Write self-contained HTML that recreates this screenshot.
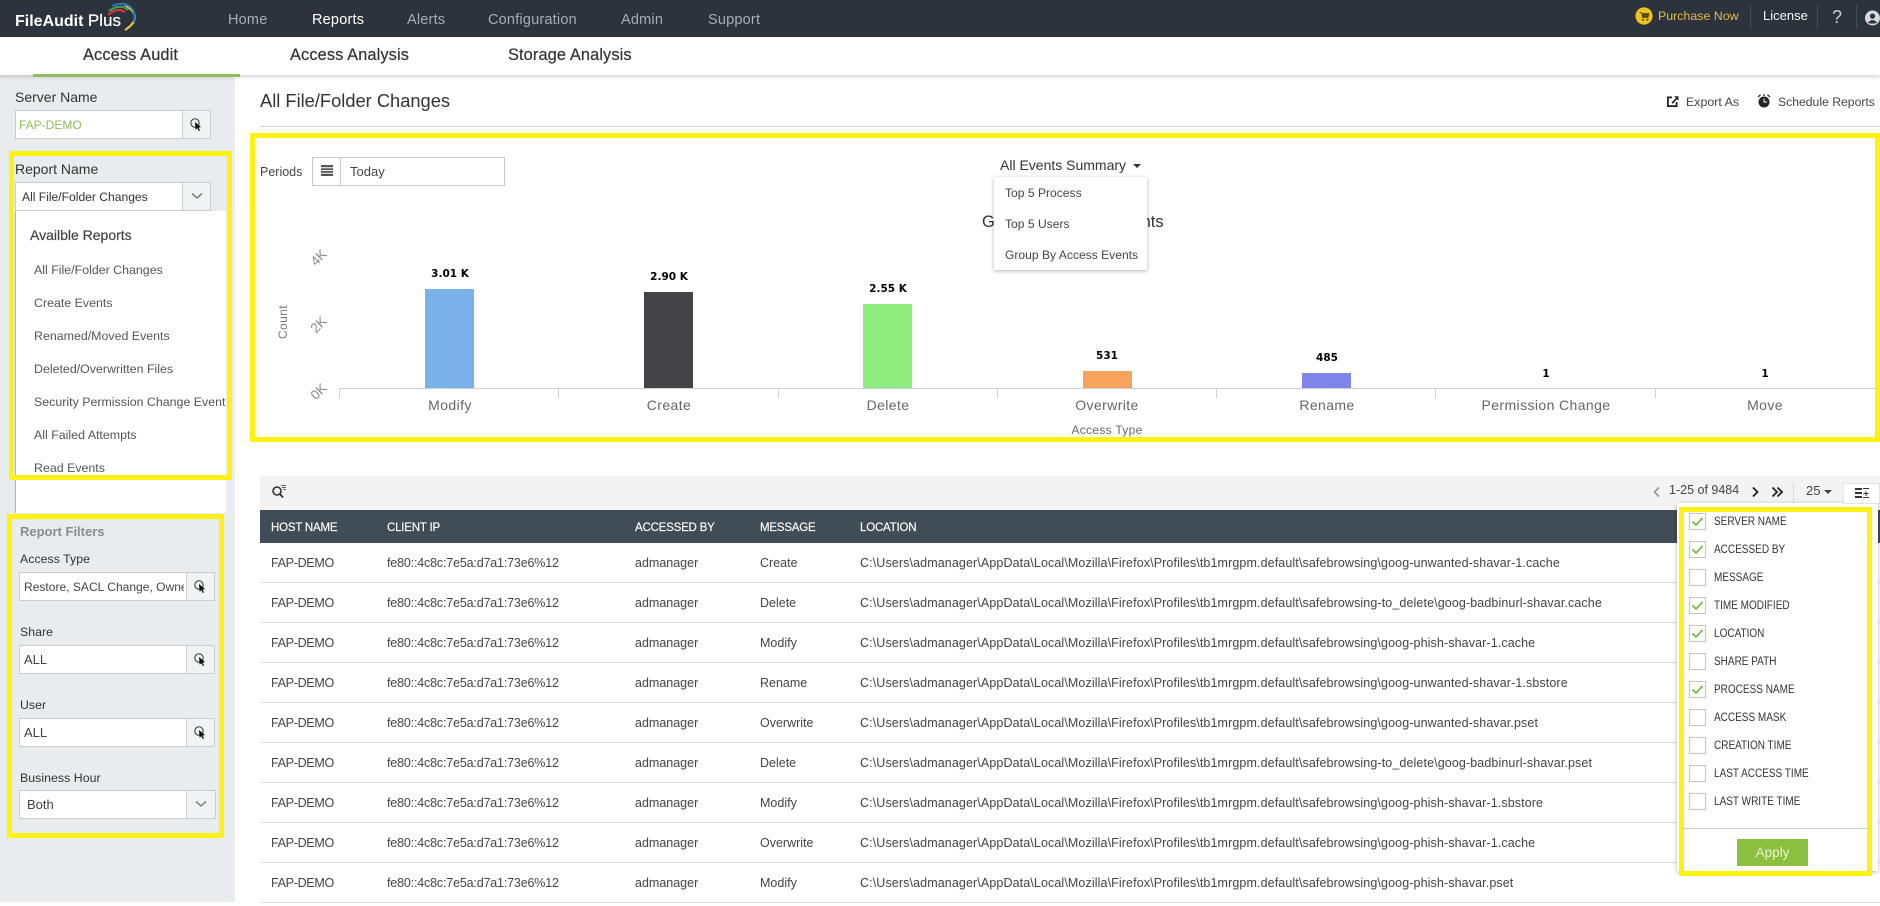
<!DOCTYPE html>
<html><head><meta charset="utf-8"><title>FileAudit Plus</title>
<style>
html,body{margin:0;padding:0;background:#fff;width:1880px;height:906px;overflow:hidden}
body{position:relative;font-family:"Liberation Sans",sans-serif;color:#333;font-size:13px}
.a{position:absolute}
.t{position:absolute;white-space:nowrap;line-height:20px;height:20px}
.nav{font-size:14.5px;color:#a9adb2;top:10px;letter-spacing:.2px}
.sub{font-size:16.4px;color:#333;top:45px;letter-spacing:.1px;-webkit-text-stroke:.2px #333}
.lab{font-size:14px;color:#333}
.lab2{font-size:12.3px;color:#333;letter-spacing:.05px}
.box{position:absolute;background:#fff;border:1px solid #c9cdd0;box-sizing:border-box;height:29px}
.btn{position:absolute;background:#f0f2f3;border:1px solid #c9cdd0;box-sizing:border-box;height:29px}
.fr{position:absolute;border:5px solid #fff212;box-sizing:border-box;pointer-events:none}
.it{font-size:12.4px;color:#555;left:34px}
.r{font-size:12.5px;color:#444;position:absolute;white-space:nowrap;line-height:20px;margin-top:1px}
.r[style*="left:860px"]{letter-spacing:.11px}
.r[style*="left:387px"]{letter-spacing:-.17px}
.r[style*="left:271px"]{letter-spacing:-.3px}
.h{font-size:11.5px;color:#fff;position:absolute;white-space:nowrap;line-height:20px;top:518px;letter-spacing:-.2px;-webkit-text-stroke:.15px #fff}
.ln{position:absolute;left:260px;width:1620px;height:1px;background:#ddd}
.cb{position:absolute;left:1689px;width:17px;height:17px;border:1px solid #c4c4c4;box-sizing:border-box;background:#fff}
.cl{position:absolute;left:1714px;font-size:11.5px;color:#333;white-space:nowrap;line-height:20px;margin-top:1px;transform:scaleX(.87);transform-origin:0 0}
.cat{font-size:14px;color:#666;transform:translateX(-50%);top:395px;letter-spacing:.4px}
.val{font-family:"DejaVu Sans",sans-serif;font-weight:bold;font-size:10.5px;color:#000;transform:translateX(-50%)}
.ax{font-size:13.5px;color:#888;transform:translate(-50%,0) rotate(-45deg)}
.tick{position:absolute;width:1px;height:10px;background:#ccd0d8;top:388px}
.ddi{font-size:12.1px;color:#444;left:1005px}
</style></head><body>

<!-- header -->
<div class="a" style="left:0;top:0;width:1880px;height:37px;background:#2d333c"></div>
<div class="t" style="left:15px;top:11px;font-size:16px;color:#fff;font-weight:bold">FileAudit <span style="font-weight:normal;font-size:17px;-webkit-text-stroke:.2px #fff">Plus</span></div>
<svg class="a" style="left:100px;top:0" width="45" height="36" viewBox="100 0 45 36" fill="none" stroke-width="2">
<path d="M125 5Q145 17 125 30" stroke="#e8c33a" stroke-width="2.2"/>
<path d="M112 6Q126 0 133 10Q136 16 134 22" stroke="#2a74b8"/>
<path d="M109 11Q120 3 128 10" stroke="#3aa655"/>
<path d="M108 15Q117 7 125 12" stroke="#d8363f"/>
</svg>
<div class="t nav" style="left:228px">Home</div>
<div class="t nav" style="left:312px;color:#fff">Reports</div>
<div class="t nav" style="left:407px">Alerts</div>
<div class="t nav" style="left:488px">Configuration</div>
<div class="t nav" style="left:621px">Admin</div>
<div class="t nav" style="left:708px">Support</div>

<svg class="a" style="left:1635px;top:7px" width="18" height="18" viewBox="0 0 18 18"><circle cx="9" cy="9" r="8.6" fill="#eec418"/><path d="M4.5 5.5H6.5L7.5 10.5H13L14 6.5H6.7" fill="#5b4a12" stroke="#5b4a12" stroke-width=".8"/><circle cx="8" cy="12.8" r="1.1" fill="#5b4a12"/><circle cx="12.4" cy="12.8" r="1.1" fill="#5b4a12"/></svg>
<div class="t" style="left:1658px;top:6px;font-size:12.4px;color:#e6b94e">Purchase Now</div>
<div class="a" style="left:1750px;top:5px;width:1px;height:24px;background:#474d56"></div>
<div class="t" style="left:1763px;top:6px;font-size:13px;color:#f2f4f6">License</div>
<div class="a" style="left:1817px;top:5px;width:1px;height:24px;background:#474d56"></div>
<div class="t" style="left:1832px;top:7px;font-size:18px;color:#c9cdd2">?</div>
<div class="a" style="left:1856px;top:5px;width:1px;height:24px;background:#474d56"></div>
<svg class="a" style="left:1865px;top:9px" width="15" height="18" viewBox="0 0 16 18"><circle cx="8" cy="9" r="8" fill="#d5d8dc"/><circle cx="8" cy="7" r="2.8" fill="#2d333c"/><path d="M3 14Q8 8.5 13 14Q8 16 3 14Z" fill="#2d333c"/></svg>

<!-- subnav -->
<div class="a" style="left:0;top:37px;width:1880px;height:38px;background:#fff;box-shadow:0 2px 4px rgba(0,0,0,.16);z-index:2"></div>
<div class="a" style="left:33px;top:74px;width:207px;height:3px;background:#8fbd5b;z-index:3"></div>
<div class="t sub" style="left:83px;z-index:3">Access Audit</div>
<div class="t sub" style="left:290px;z-index:3">Access Analysis</div>
<div class="t sub" style="left:508px;z-index:3">Storage Analysis</div>

<!-- sidebar -->
<div class="a" style="left:0;top:75px;width:235px;height:827px;background:#e9ecee"></div>
<div class="t lab" style="left:15px;top:87px">Server Name</div>
<div class="box" style="left:15px;top:110px;width:168px"></div>
<div class="t" style="left:19px;top:115px;font-size:12px;color:#8fbd5b">FAP-DEMO</div>
<div class="btn" style="left:182px;top:110px;width:29px"></div>
<svg class="a" style="left:188px;top:116px" width="17" height="17" viewBox="0 0 17 17"><circle cx="7" cy="7" r="4.2" fill="none" stroke="#333" stroke-width="1"/><path d="M7 6L13 11L10.6 11.6L12 14.5L10.8 15L9.4 12.2L7.6 13.6Z" fill="#111"/></svg>

<div class="t lab" style="left:15px;top:159px">Report Name</div>
<div class="box" style="left:15px;top:182px;width:168px"></div>
<div class="t" style="left:22px;top:187px;font-size:12.1px;color:#333">All File/Folder Changes</div>
<div class="btn" style="left:182px;top:182px;width:29px"></div>
<svg class="a" style="left:190px;top:192px" width="14" height="8" viewBox="0 0 14 8"><path d="M2 1.5L7 6L12 1.5" fill="none" stroke="#666" stroke-width="1.2"/></svg>

<div class="a" style="left:15px;top:211px;width:211px;height:302px;background:#fff;border-left:1px solid #aeb3b7;box-sizing:border-box;overflow:hidden">
 <div class="t" style="left:14px;top:14px;font-size:14px;color:#444;-webkit-text-stroke:.2px #444">Availble Reports</div>
 <div class="t it" style="left:18px;top:49px">All File/Folder Changes</div>
 <div class="t it" style="left:18px;top:82px">Create Events</div>
 <div class="t it" style="left:18px;top:115px">Renamed/Moved Events</div>
 <div class="t it" style="left:18px;top:148px">Deleted/Overwritten Files</div>
 <div class="t it" style="left:18px;top:181px">Security Permission Change Events</div>
 <div class="t it" style="left:18px;top:214px">All Failed Attempts</div>
 <div class="t it" style="left:18px;top:247px">Read Events</div>
</div>
<div class="fr" style="left:9px;top:151px;width:223px;height:329px"></div>

<div class="t" style="left:20px;top:522px;font-size:13px;font-weight:bold;color:#8a8d90">Report Filters</div>
<div class="t lab2" style="left:20px;top:549px">Access Type</div>
<div class="box" style="left:19px;top:572px;width:168px;overflow:hidden"><div class="t" style="left:4px;top:4px;font-size:12.05px;color:#444;width:160px;overflow:hidden">Restore, SACL Change, Owner Change</div></div>
<div class="btn" style="left:186px;top:572px;width:29px"></div>
<svg class="a" style="left:192px;top:578px" width="17" height="17" viewBox="0 0 17 17"><circle cx="7" cy="7" r="4.2" fill="none" stroke="#333" stroke-width="1"/><path d="M7 6L13 11L10.6 11.6L12 14.5L10.8 15L9.4 12.2L7.6 13.6Z" fill="#111"/></svg>
<div class="t lab2" style="left:20px;top:622px">Share</div>
<div class="box" style="left:19px;top:645px;width:168px"><div class="t" style="left:4px;top:4px;font-size:13px;color:#444">ALL</div></div>
<div class="btn" style="left:186px;top:645px;width:29px"></div>
<svg class="a" style="left:192px;top:651px" width="17" height="17" viewBox="0 0 17 17"><circle cx="7" cy="7" r="4.2" fill="none" stroke="#333" stroke-width="1"/><path d="M7 6L13 11L10.6 11.6L12 14.5L10.8 15L9.4 12.2L7.6 13.6Z" fill="#111"/></svg>
<div class="t lab2" style="left:20px;top:695px">User</div>
<div class="box" style="left:19px;top:718px;width:168px"><div class="t" style="left:4px;top:4px;font-size:13px;color:#444">ALL</div></div>
<div class="btn" style="left:186px;top:718px;width:29px"></div>
<svg class="a" style="left:192px;top:724px" width="17" height="17" viewBox="0 0 17 17"><circle cx="7" cy="7" r="4.2" fill="none" stroke="#333" stroke-width="1"/><path d="M7 6L13 11L10.6 11.6L12 14.5L10.8 15L9.4 12.2L7.6 13.6Z" fill="#111"/></svg>
<div class="t lab2" style="left:20px;top:768px">Business Hour</div>
<div class="box" style="left:19px;top:790px;width:168px"><div class="t" style="left:7px;top:4px;font-size:13px;color:#444">Both</div></div>
<div class="btn" style="left:186px;top:790px;width:30px"></div>
<svg class="a" style="left:194px;top:800px" width="14" height="8" viewBox="0 0 14 8"><path d="M2 1.5L7 6L12 1.5" fill="none" stroke="#666" stroke-width="1.2"/></svg>
<div class="fr" style="left:7px;top:514px;width:217px;height:324px"></div>

<!-- title row -->
<div class="t" style="left:260px;top:91px;font-size:18.3px;color:#333">All File/Folder Changes</div>
<svg class="a" style="left:1666px;top:95px" width="13" height="13" viewBox="0 0 13 13"><path d="M1 1.5H6V3.2H2.8V10.2H9.8V7H11.5V12H1Z" fill="#222"/><path d="M5.5 7.5L10 3L8 1.2H12.5V5.7L11 4.2L6.8 8.8Z" fill="#222"/></svg>
<div class="t" style="left:1686px;top:92px;font-size:12.4px;color:#444">Export As</div>
<svg class="a" style="left:1757px;top:93px" width="14" height="16" viewBox="0 0 14 16"><circle cx="7" cy="9" r="5.5" fill="#222"/><path d="M7 5.5V9H10" stroke="#fff" stroke-width="1" fill="none"/><path d="M1 4L3.5 1.8M13 4L10.5 1.8M7 1V3" stroke="#222" stroke-width="1.2"/></svg>
<div class="t" style="left:1778px;top:92px;font-size:12.2px;color:#444">Schedule Reports</div>
<div class="a" style="left:260px;top:126px;width:1620px;height:1px;background:#d0d0d0"></div>

<!-- chart -->
<div class="t" style="left:260px;top:162px;font-size:12.5px;color:#444">Periods</div>
<div class="a" style="left:312px;top:157px;width:193px;height:29px;border:1px solid #c9c9c9;box-sizing:border-box;background:#fff"></div>
<div class="a" style="left:340px;top:157px;width:1px;height:29px;background:#c9c9c9"></div>
<svg class="a" style="left:321px;top:165px" width="12" height="12" viewBox="0 0 12 12"><path d="M0 0H12V2.2H0ZM0 3.2H12V5H0ZM0 6H12V7.8H0ZM0 8.8H12V11H0Z" fill="#555"/></svg>
<div class="t" style="left:350px;top:162px;font-size:13px;color:#444">Today</div>

<div class="t" style="left:982px;top:212px;font-size:16.5px;color:#333">Group By Access Events</div>

<div class="t ax" style="left:319px;top:248px">4K</div>
<div class="t ax" style="left:319px;top:315px">2K</div>
<div class="t ax" style="left:319px;top:382px">0K</div>
<div class="t" style="left:283px;top:312px;font-size:12px;color:#777;transform:translateX(-50%) rotate(-90deg);letter-spacing:.4px">Count</div>

<div class="a" style="left:425px;top:289px;width:49px;height:99px;background:#7ab1e8"></div>
<div class="a" style="left:644px;top:292px;width:49px;height:96px;background:#434348"></div>
<div class="a" style="left:863px;top:304px;width:49px;height:84px;background:#90ed7d"></div>
<div class="a" style="left:1083px;top:371px;width:49px;height:17px;background:#f7a35c"></div>
<div class="a" style="left:1302px;top:373px;width:49px;height:15px;background:#8085e9"></div>

<div class="a" style="left:339px;top:388px;width:1536px;height:1px;background:#ccd0d8"></div>
<div class="tick" style="left:339px"></div><div class="tick" style="left:558px"></div><div class="tick" style="left:778px"></div><div class="tick" style="left:997px"></div><div class="tick" style="left:1216px"></div><div class="tick" style="left:1435px"></div><div class="tick" style="left:1655px"></div>

<div class="t val" style="left:450px;top:264px">3.01 K</div>
<div class="t val" style="left:669px;top:267px">2.90 K</div>
<div class="t val" style="left:888px;top:279px">2.55 K</div>
<div class="t val" style="left:1107px;top:346px">531</div>
<div class="t val" style="left:1327px;top:348px">485</div>
<div class="t val" style="left:1546px;top:364px">1</div>
<div class="t val" style="left:1765px;top:364px">1</div>

<div class="t cat" style="left:450px">Modify</div>
<div class="t cat" style="left:669px">Create</div>
<div class="t cat" style="left:888px">Delete</div>
<div class="t cat" style="left:1107px">Overwrite</div>
<div class="t cat" style="left:1327px">Rename</div>
<div class="t cat" style="left:1546px">Permission Change</div>
<div class="t cat" style="left:1765px">Move</div>
<div class="t" style="left:1107px;top:420px;font-size:12px;color:#666;transform:translateX(-50%);letter-spacing:.3px">Access Type</div>

<div class="t" style="left:1000px;top:155px;font-size:14px;color:#333">All Events Summary</div>
<div class="a" style="left:1133px;top:164px;width:0;height:0;border-left:4px solid transparent;border-right:4px solid transparent;border-top:4px solid #333"></div>
<div class="a" style="left:994px;top:177px;width:153px;height:93px;background:#fff;box-shadow:0 1px 4px rgba(0,0,0,.3)"></div>
<div class="t ddi" style="top:183px">Top 5 Process</div>
<div class="t ddi" style="top:214px">Top 5 Users</div>
<div class="t ddi" style="top:245px">Group By Access Events</div>

<div class="fr" style="left:250px;top:133px;width:1630px;height:309px"></div>

<!-- table toolbar -->
<div class="a" style="left:260px;top:476px;width:1620px;height:34px;background:#f3f3f3"></div>
<svg class="a" style="left:271px;top:483px" width="16" height="16" viewBox="0 0 16 16" fill="none" stroke="#333"><circle cx="6" cy="8" r="4" stroke-width="1.6"/><path d="M9 11L12 14.5" stroke-width="1.8"/><path d="M10 2.5H15M11 4.5H15M12 6.5H15" stroke-width=".8"/></svg>
<svg class="a" style="left:1652px;top:486px" width="9" height="12" viewBox="0 0 9 12"><path d="M7 1.5L2.5 6L7 10.5" fill="none" stroke="#999" stroke-width="1.8"/></svg>
<div class="t" style="left:1669px;top:480px;font-size:12.5px;color:#444">1-25 of 9484</div>
<svg class="a" style="left:1751px;top:486px" width="9" height="12" viewBox="0 0 9 12"><path d="M2 1.5L6.5 6L2 10.5" fill="none" stroke="#222" stroke-width="1.8"/></svg>
<svg class="a" style="left:1771px;top:486px" width="13" height="12" viewBox="0 0 13 12"><path d="M1.5 1.5L6 6L1.5 10.5M6.5 1.5L11 6L6.5 10.5" fill="none" stroke="#222" stroke-width="1.8"/></svg>
<div class="a" style="left:1793px;top:483px;width:1px;height:24px;background:#ddd"></div>
<div class="t" style="left:1806px;top:481px;font-size:13px;color:#444">25</div>
<div class="a" style="left:1824px;top:490px;width:0;height:0;border-left:4px solid transparent;border-right:4px solid transparent;border-top:4px solid #444"></div>
<div class="a" style="left:1843px;top:483px;width:37px;height:21px;background:#fff;border:1px solid #e3e3e3;box-sizing:border-box;z-index:1"></div>
<svg class="a" style="left:1855px;top:488px;z-index:2" width="14" height="11" viewBox="0 0 14 11" fill="#333"><path d="M0 0H7V2H0ZM0 4H7V6H0ZM0 8H7V10H0ZM8 0H14V1H8ZM10.5 3H11.5V5H13.5V6H11.5V8H10.5V6H8.5V5H10.5ZM8 9H14V10H8Z"/></svg>

<!-- table -->
<div class="a" style="left:260px;top:510px;width:1620px;height:33px;background:#414d56"></div>
<div class="h" style="left:271px">HOST NAME</div>
<div class="h" style="left:387px">CLIENT IP</div>
<div class="h" style="left:635px">ACCESSED BY</div>
<div class="h" style="left:760px">MESSAGE</div>
<div class="h" style="left:860px">LOCATION</div>

<div class="ln" style="top:582px"></div><div class="ln" style="top:622px"></div><div class="ln" style="top:662px"></div><div class="ln" style="top:702px"></div><div class="ln" style="top:742px"></div><div class="ln" style="top:782px"></div><div class="ln" style="top:822px"></div><div class="ln" style="top:862px"></div><div class="ln" style="top:902px"></div>

<div class="r" style="left:271px;top:552px">FAP-DEMO</div><div class="r" style="left:387px;top:552px">fe80::4c8c:7e5a:d7a1:73e6%12</div><div class="r" style="left:635px;top:552px">admanager</div><div class="r" style="left:760px;top:552px">Create</div><div class="r" style="left:860px;top:552px">C:\Users\admanager\AppData\Local\Mozilla\Firefox\Profiles\tb1mrgpm.default\safebrowsing\goog-unwanted-shavar-1.cache</div>
<div class="r" style="left:271px;top:592px">FAP-DEMO</div><div class="r" style="left:387px;top:592px">fe80::4c8c:7e5a:d7a1:73e6%12</div><div class="r" style="left:635px;top:592px">admanager</div><div class="r" style="left:760px;top:592px">Delete</div><div class="r" style="left:860px;top:592px">C:\Users\admanager\AppData\Local\Mozilla\Firefox\Profiles\tb1mrgpm.default\safebrowsing-to_delete\goog-badbinurl-shavar.cache</div>
<div class="r" style="left:271px;top:632px">FAP-DEMO</div><div class="r" style="left:387px;top:632px">fe80::4c8c:7e5a:d7a1:73e6%12</div><div class="r" style="left:635px;top:632px">admanager</div><div class="r" style="left:760px;top:632px">Modify</div><div class="r" style="left:860px;top:632px">C:\Users\admanager\AppData\Local\Mozilla\Firefox\Profiles\tb1mrgpm.default\safebrowsing\goog-phish-shavar-1.cache</div>
<div class="r" style="left:271px;top:672px">FAP-DEMO</div><div class="r" style="left:387px;top:672px">fe80::4c8c:7e5a:d7a1:73e6%12</div><div class="r" style="left:635px;top:672px">admanager</div><div class="r" style="left:760px;top:672px">Rename</div><div class="r" style="left:860px;top:672px">C:\Users\admanager\AppData\Local\Mozilla\Firefox\Profiles\tb1mrgpm.default\safebrowsing\goog-unwanted-shavar-1.sbstore</div>
<div class="r" style="left:271px;top:712px">FAP-DEMO</div><div class="r" style="left:387px;top:712px">fe80::4c8c:7e5a:d7a1:73e6%12</div><div class="r" style="left:635px;top:712px">admanager</div><div class="r" style="left:760px;top:712px">Overwrite</div><div class="r" style="left:860px;top:712px">C:\Users\admanager\AppData\Local\Mozilla\Firefox\Profiles\tb1mrgpm.default\safebrowsing\goog-unwanted-shavar.pset</div>
<div class="r" style="left:271px;top:752px">FAP-DEMO</div><div class="r" style="left:387px;top:752px">fe80::4c8c:7e5a:d7a1:73e6%12</div><div class="r" style="left:635px;top:752px">admanager</div><div class="r" style="left:760px;top:752px">Delete</div><div class="r" style="left:860px;top:752px">C:\Users\admanager\AppData\Local\Mozilla\Firefox\Profiles\tb1mrgpm.default\safebrowsing-to_delete\goog-badbinurl-shavar.pset</div>
<div class="r" style="left:271px;top:792px">FAP-DEMO</div><div class="r" style="left:387px;top:792px">fe80::4c8c:7e5a:d7a1:73e6%12</div><div class="r" style="left:635px;top:792px">admanager</div><div class="r" style="left:760px;top:792px">Modify</div><div class="r" style="left:860px;top:792px">C:\Users\admanager\AppData\Local\Mozilla\Firefox\Profiles\tb1mrgpm.default\safebrowsing\goog-phish-shavar-1.sbstore</div>
<div class="r" style="left:271px;top:832px">FAP-DEMO</div><div class="r" style="left:387px;top:832px">fe80::4c8c:7e5a:d7a1:73e6%12</div><div class="r" style="left:635px;top:832px">admanager</div><div class="r" style="left:760px;top:832px">Overwrite</div><div class="r" style="left:860px;top:832px">C:\Users\admanager\AppData\Local\Mozilla\Firefox\Profiles\tb1mrgpm.default\safebrowsing\goog-phish-shavar-1.cache</div>
<div class="r" style="left:271px;top:872px">FAP-DEMO</div><div class="r" style="left:387px;top:872px">fe80::4c8c:7e5a:d7a1:73e6%12</div><div class="r" style="left:635px;top:872px">admanager</div><div class="r" style="left:760px;top:872px">Modify</div><div class="r" style="left:860px;top:872px">C:\Users\admanager\AppData\Local\Mozilla\Firefox\Profiles\tb1mrgpm.default\safebrowsing\goog-phish-shavar.pset</div>

<!-- column popup -->
<div class="a" style="left:1677px;top:503px;width:201px;height:368px;background:#fff;box-shadow:0 1px 4px rgba(0,0,0,.3)"></div>
<div class="cb" style="top:513px"><svg width="15" height="15" viewBox="0 0 15 15"><path d="M2.5 7.5L6 11L12.5 4" fill="none" stroke="#6db33f" stroke-width="1.6"/></svg></div><div class="cl" style="top:511px">SERVER NAME</div>
<div class="cb" style="top:541px"><svg width="15" height="15" viewBox="0 0 15 15"><path d="M2.5 7.5L6 11L12.5 4" fill="none" stroke="#6db33f" stroke-width="1.6"/></svg></div><div class="cl" style="top:539px">ACCESSED BY</div>
<div class="cb" style="top:569px"></div><div class="cl" style="top:567px">MESSAGE</div>
<div class="cb" style="top:597px"><svg width="15" height="15" viewBox="0 0 15 15"><path d="M2.5 7.5L6 11L12.5 4" fill="none" stroke="#6db33f" stroke-width="1.6"/></svg></div><div class="cl" style="top:595px">TIME MODIFIED</div>
<div class="cb" style="top:625px"><svg width="15" height="15" viewBox="0 0 15 15"><path d="M2.5 7.5L6 11L12.5 4" fill="none" stroke="#6db33f" stroke-width="1.6"/></svg></div><div class="cl" style="top:623px">LOCATION</div>
<div class="cb" style="top:653px"></div><div class="cl" style="top:651px">SHARE PATH</div>
<div class="cb" style="top:681px"><svg width="15" height="15" viewBox="0 0 15 15"><path d="M2.5 7.5L6 11L12.5 4" fill="none" stroke="#6db33f" stroke-width="1.6"/></svg></div><div class="cl" style="top:679px">PROCESS NAME</div>
<div class="cb" style="top:709px"></div><div class="cl" style="top:707px">ACCESS MASK</div>
<div class="cb" style="top:737px"></div><div class="cl" style="top:735px">CREATION TIME</div>
<div class="cb" style="top:765px"></div><div class="cl" style="top:763px">LAST ACCESS TIME</div>
<div class="cb" style="top:793px"></div><div class="cl" style="top:791px">LAST WRITE TIME</div>
<div class="a" style="left:1684px;top:828px;width:183px;height:1px;background:#ccc"></div>
<div class="a" style="left:1737px;top:839px;width:71px;height:27px;background:#8bbf3f;color:#eaf5d6;font-size:13.5px;text-align:center;line-height:27px">Apply</div>
<div class="fr" style="left:1679px;top:507px;width:193px;height:369px"></div>

</body></html>
